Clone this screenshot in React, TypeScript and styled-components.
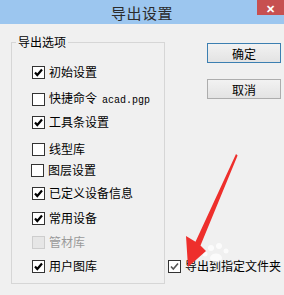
import React from "react";
import styled, { createGlobalStyle } from "styled-components";

const GlobalStyle = createGlobalStyle`
  html, body {
    margin: 0;
    padding: 0;
    background: #f0f0f0;
  }
  body {
    font-family: "Noto Sans CJK SC", "Noto Sans", sans-serif;
    font-size: 12px;
    color: #000;
  }
`;

interface Option {
  label: string;
  extra?: string;
  checked: boolean;
  disabled?: boolean;
  gap: number;
  indent?: number;
}

const options: Option[] = [
  { label: "初始设置", checked: true, gap: 15 },
  { label: "快捷命令", extra: "acad.pgp", checked: false, gap: 11 },
  { label: "工具条设置", checked: true, gap: 7 },
  { label: "线型库", checked: false, gap: 11 },
  { label: "图层设置", checked: false, gap: 5, indent: 19 },
  { label: "已定义设备信息", checked: true, gap: 7 },
  { label: "常用设备", checked: true, gap: 9 },
  { label: "管材库", checked: false, disabled: true, gap: 8 },
  { label: "用户图库", checked: true, gap: 8 },
];

export default function App() {
  return (
    <>
      <GlobalStyle />
      <Dialog>
        <TitleBar>
          <Title>导出设置</Title>
          <CloseButton>✕</CloseButton>
        </TitleBar>

        <Body>
          <GroupBox>
            <Legend>导出选项</Legend>
            {options.map((opt) => (
              <OptionRow key={opt.label} $gap={opt.gap} $indent={opt.indent ?? 20}>
                <CheckBox checked={opt.checked} disabled={opt.disabled} />
                <OptionLabel $disabled={opt.disabled}>
                  {opt.label}
                  {opt.extra && <FileName>{opt.extra}</FileName>}
                </OptionLabel>
              </OptionRow>
            ))}
          </GroupBox>

          <SideColumn>
            <DialogButton $primary>确定</DialogButton>
            <DialogButton>取消</DialogButton>
            <FolderRow>
              <CheckBox checked faded />
              <OptionLabel>导出到指定文件夹</OptionLabel>
            </FolderRow>
          </SideColumn>
        </Body>

        <Overlay width="284" height="295" viewBox="0 0 284 295">
          <g fill="#ffffff" opacity="0.75">
            <circle cx="211" cy="248" r="3" />
            <circle cx="219" cy="246" r="3" />
            <circle cx="226" cy="251" r="2.5" />
            <circle cx="205" cy="254" r="2.5" />
            <ellipse cx="216" cy="258" rx="6" ry="4.5" />
          </g>
          <polygon
            fill="#ee2f2c"
            points="236,154 237.6,155.4 200.5,245.5 206,251 188,267 186,236 195.5,241.8"
          />
        </Overlay>
      </Dialog>
    </>
  );
}

const CheckBox: React.FC<{ checked: boolean; disabled?: boolean; faded?: boolean }> = ({
  checked,
  disabled,
  faded,
}) => (
  <Box $disabled={disabled}>
    {checked && (
      <svg width="11" height="11" viewBox="0 0 11 11">
        <path
          d="M2 5.5 L4.3 8 L9 2.5"
          fill="none"
          stroke={faded ? "#555" : "#000"}
          strokeWidth={faded ? 1.6 : 2.2}
        />
      </svg>
    )}
  </Box>
);

const Dialog = styled.div`
  position: relative;
  width: 284px;
  height: 295px;
  background: #f0f0f0;
  overflow: hidden;
`;

const TitleBar = styled.div`
  position: relative;
  height: 24px;
  background: #9cc6ef;
  display: flex;
  align-items: center;
  justify-content: center;
`;

const Title = styled.div`
  font-size: 15px;
  color: #2b2b2b;
  letter-spacing: 0.5px;
`;

const CloseButton = styled.div`
  position: absolute;
  top: 0;
  right: 0;
  width: 27px;
  height: 15px;
  background: #c75050;
  color: #fff;
  font-size: 11px;
  font-weight: bold;
  display: flex;
  align-items: center;
  justify-content: center;
`;

const Body = styled.div`
  display: flex;
  height: 271px;
`;

const GroupBox = styled.fieldset`
  box-sizing: border-box;
  margin: 11px 0 0 11px;
  padding: 0;
  width: 154px;
  height: 249px;
  border: 1px solid #d6d6d6;
  min-width: 0;
`;

const Legend = styled.legend`
  margin-left: 4px;
  padding: 0 2px;
  line-height: 14px;
  font-size: 12px;
`;

const OptionRow = styled.div<{ $gap: number; $indent: number }>`
  display: flex;
  align-items: center;
  height: 16px;
  margin-top: ${(p) => p.$gap}px;
  padding-left: ${(p) => p.$indent}px;
`;

const Box = styled.div<{ $disabled?: boolean }>`
  box-sizing: border-box;
  width: 13px;
  height: 13px;
  flex: none;
  border: 1px solid ${(p) => (p.$disabled ? "#cdcdcd" : "#333")};
  background: ${(p) => (p.$disabled ? "#e6e6e6" : "#fff")};
  display: flex;
  align-items: center;
  justify-content: center;
  margin-right: 4px;
`;

const OptionLabel = styled.span<{ $disabled?: boolean }>`
  font-size: 12px;
  line-height: 16px;
  white-space: nowrap;
  color: ${(p) => (p.$disabled ? "#9a9a9a" : "#000")};
`;

const FileName = styled.span`
  font-family: "Liberation Mono", monospace;
  font-size: 10px;
  margin-left: 5px;
`;

const SideColumn = styled.div`
  flex: 1;
  display: flex;
  flex-direction: column;
  padding-top: 19px;
`;

const DialogButton = styled.div<{ $primary?: boolean }>`
  box-sizing: border-box;
  width: 74px;
  height: 20px;
  margin-left: 42px;
  margin-bottom: 16px;
  border: 1px solid ${(p) => (p.$primary ? "#3c7fb1" : "#adadad")};
  background: linear-gradient(#f2f2f2, #e3e3e3);
  display: flex;
  align-items: center;
  justify-content: center;
  font-size: 12px;
`;

const FolderRow = styled.div`
  display: flex;
  align-items: center;
  height: 16px;
  margin-top: auto;
  margin-bottom: 21px;
  margin-left: 3px;
`;

const Overlay = styled.svg`
  position: absolute;
  left: 0;
  top: 0;
  pointer-events: none;
`;
